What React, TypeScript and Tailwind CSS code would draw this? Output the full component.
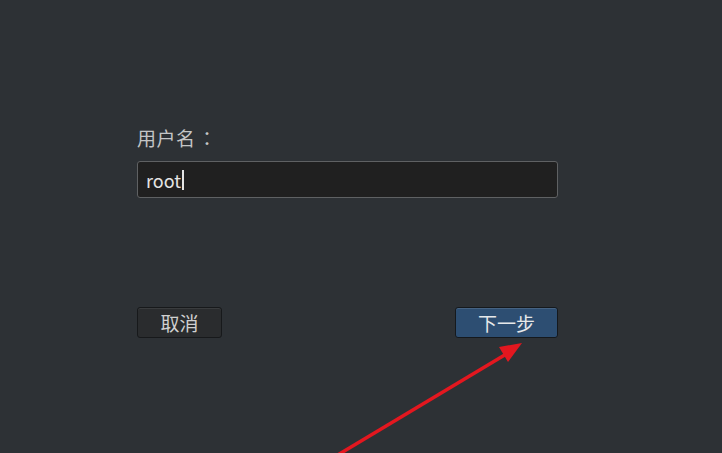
export default function App() {
  return (
    <div
      className="relative h-[453px] w-[722px] overflow-hidden bg-[#2d3135]"
      style={{ fontFamily: '"Noto Sans CJK SC", "Liberation Sans", sans-serif' }}
    >
      <div className="ml-[137px] w-[421px] pt-[125px]">
        <div className="text-[19px] leading-[26px] tracking-[0.5px] text-[#c4c5c6]">
          用户名
          <span className="ml-[2px]" style={{ fontFamily: '"Noto Sans CJK TC", sans-serif' }}>：</span>
        </div>
        <div className="mt-[10px] flex h-[37px] items-center rounded-[3px] border border-[#5f6163] bg-[#202020] px-[8px]">
          <span className="text-[18px] leading-none text-[#e4e4e4]">root</span>
          <span className="ml-[1px] h-[20px] w-[2px] bg-[#e4e4e4]" />
        </div>

        <div className="mt-[109px] flex items-center justify-between">
          <button className="h-[31px] w-[85px] rounded-[3px] border border-[#17191b] bg-[#2a2c2e] text-[19px] leading-none text-[#d0d0d0] shadow-[inset_0_1px_0_rgba(255,255,255,0.08)]">
            取消
          </button>
          <button className="h-[31px] w-[103px] rounded-[3px] border border-[#15191d] bg-[#2d4e72] text-[19px] leading-none text-[#e6e8ea] shadow-[inset_0_1px_0_rgba(255,255,255,0.12)]">
            下一步
          </button>
        </div>
      </div>

      {/* annotation arrow */}
      <svg className="absolute left-0 top-0" width="722" height="453" viewBox="0 0 722 453">
        <line x1="336" y1="456" x2="508" y2="353" stroke="#e3171f" strokeWidth="3.5" />
        <polygon points="522,343 499,347 508,362" fill="#e3171f" />
      </svg>
    </div>
  );
}
